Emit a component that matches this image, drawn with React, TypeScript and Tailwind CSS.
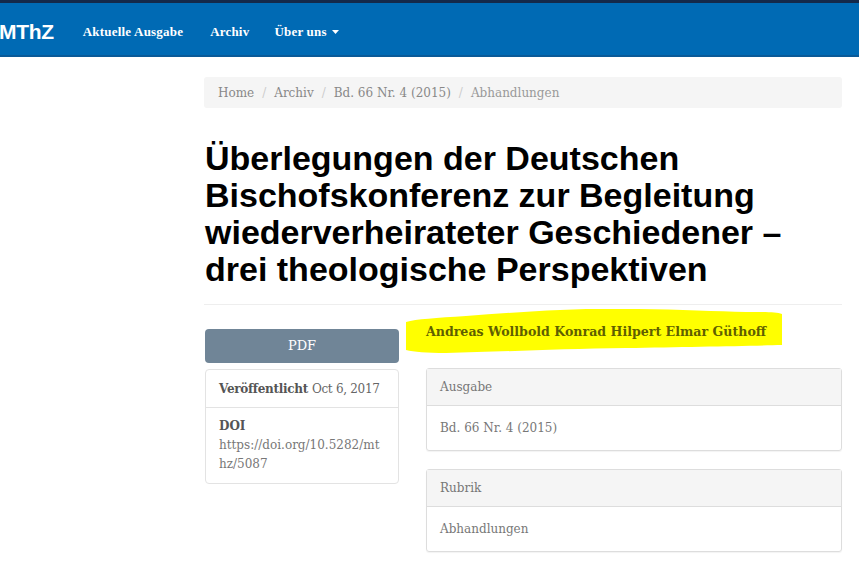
import React from "react";

const serif = { fontFamily: '"DejaVu Serif", "Liberation Serif", serif' };

export default function App() {
  return (
    <div className="min-h-[566px] bg-white" style={serif}>
      {/* Navbar */}
      <div className="border-t-[3px] border-t-[#14294a] border-b-2 border-b-[#0a5a98] bg-[#006ab4] h-[57px] pt-[5px] flex items-center">
        <div
          className="text-white text-[21px] font-bold tracking-[-0.3px] -ml-[1px]"
          style={{ fontFamily: '"Liberation Sans", Arial, sans-serif' }}
        >
          MThZ
        </div>
        <div
          className="flex items-center ml-[29px] text-white text-[13px] font-bold"
          style={{ fontFamily: '"Liberation Serif", serif' }}
        >
          <span className="tracking-[0.2px]">Aktuelle Ausgabe</span>
          <span className="ml-[27px] tracking-[0.2px]">Archiv</span>
          <span className="ml-[25px] flex items-center gap-[5px] tracking-[0.2px]">
            Über uns
            <svg width="7" height="4" viewBox="0 0 7 4"><path d="M0 0h7L3.5 4z" fill="white" /></svg>
          </span>
        </div>
      </div>

      <div className="ml-[204px] w-[638px]">
        {/* Breadcrumb */}
        <div className="mt-[20px] h-[31px] bg-[#f5f5f5] rounded-[3px] flex items-center px-[14px] text-[12px] text-[#888]">
          <span>Home</span>
          <span className="mx-[8px] text-[#ccc]">/</span>
          <span>Archiv</span>
          <span className="mx-[8px] text-[#ccc]">/</span>
          <span>Bd. 66 Nr. 4 (2015)</span>
          <span className="mx-[8px] text-[#ccc]">/</span>
          <span className="text-[#999]">Abhandlungen</span>
        </div>

        {/* Title */}
        <h1
          className="mt-[32px] pl-[1px] text-[34px] leading-[37px] font-bold text-black pb-[16px] border-b border-[#eee]"
          style={{ fontFamily: '"Liberation Sans", Arial, sans-serif' }}
        >
          Überlegungen der Deutschen Bischofskonferenz zur Begleitung wiederverheirateter Geschiedener – drei theologische Perspektiven
        </h1>

        <div className="flex mt-[24px]">
          {/* Left column */}
          <div className="w-[195px] pl-[1px] flex flex-col">
            <div className="h-[34px] bg-[#708597] rounded-[4px] flex items-center justify-center text-white text-[13px]">
              PDF
            </div>
            <div className="mt-[6px] border border-[#e3e3e3] rounded-[4px] text-[12px] text-[#666]">
              <div className="px-[13px] h-[38px] flex items-center whitespace-nowrap tracking-[-0.3px] border-b border-[#e3e3e3]">
                <span className="font-bold text-[#555]">Veröffentlicht</span>
                <span className="ml-[4px]">Oct 6, 2017</span>
              </div>
              <div className="px-[13px] pt-[9px] pb-[9px] leading-[19px]">
                <div className="font-bold text-[#555]">DOI</div>
                <div className="break-all text-[#777]">https://doi.org/10.5282/mthz/5087</div>
              </div>
            </div>
          </div>

          {/* Right column */}
          <div className="ml-[27px] flex-1 flex flex-col">
            <div className="relative h-[38px] -mt-[11px]">
              <svg
                className="absolute"
                style={{ left: -20, top: -9 }}
                width="400"
                height="60"
                viewBox="0 0 400 60"
              >
                <path
                  d="M0 13 C 10 10, 30 9, 60 7 C 100 4, 140 1, 180 0 C 240 -1, 300 2, 340 3 C 360 3, 370 3, 376 5 L 376 36 C 340 37, 280 38, 220 39 C 150 40, 90 43, 40 44 C 20 44, 8 43, 0 41 Z"
                  fill="#ffff00"
                />
              </svg>
              <div className="relative pt-[5px] text-[12.6px] font-bold text-[#5f5f00]">
                Andreas Wollbold Konrad Hilpert Elmar Güthoff
              </div>
            </div>

            <div className="mt-[12px] border border-[#ddd] rounded-[3px] text-[12px] text-[#777] shadow-[0_1px_1px_rgba(0,0,0,0.05)]">
              <div className="h-[37px] bg-[#f5f5f5] border-b border-[#ddd] flex items-center px-[13px]">Ausgabe</div>
              <div className="h-[44px] flex items-center px-[13px]">Bd. 66 Nr. 4 (2015)</div>
            </div>

            <div className="mt-[18px] border border-[#ddd] rounded-[3px] text-[12px] text-[#777] shadow-[0_1px_1px_rgba(0,0,0,0.05)]">
              <div className="h-[37px] bg-[#f5f5f5] border-b border-[#ddd] flex items-center px-[13px]">Rubrik</div>
              <div className="h-[44px] flex items-center px-[13px]">Abhandlungen</div>
            </div>
          </div>
        </div>
      </div>
    </div>
  );
}
